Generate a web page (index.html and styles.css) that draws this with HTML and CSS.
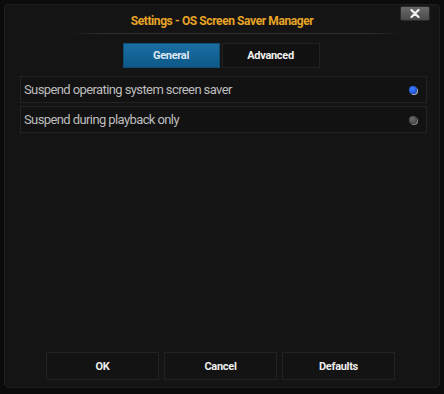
FILE: index.html
```html
<!DOCTYPE html>
<html lang="en">

<head>
  <meta charset="UTF-8">
  <meta name="viewport" content="width=device-width, initial-scale=1.0">
  <title>Settings</title>
  <link rel="stylesheet" href="styles.css">
</head>

<body>
  <div class="dialog">
    <div class="dialog-head">
      <h1 class="dialog-title">Settings - OS Screen Saver Manager</h1>
      <button class="close-btn">
        <svg width="10" height="9" viewBox="0 0 10 9">
          <path d="M1.5 1 L8.5 8 M8.5 1 L1.5 8" stroke="#f2f2f2" stroke-width="2.2" stroke-linecap="round" />
        </svg>
      </button>
    </div>
    <div class="title-rule"></div>

    <div class="tabs">
      <button class="tab tab-active">General</button>
      <button class="tab">Advanced</button>
    </div>

    <div class="settings">
      <div class="setting-row">
        <span>Suspend operating system screen saver</span>
        <span class="radio radio-on"></span>
      </div>
      <div class="setting-row">
        <span>Suspend during playback only</span>
        <span class="radio"></span>
      </div>
    </div>

    <div class="dialog-foot">
      <button class="foot-btn">OK</button>
      <button class="foot-btn">Cancel</button>
      <button class="foot-btn">Defaults</button>
    </div>
  </div>
</body>

</html>
```

FILE: styles.css
```css
body {
  margin: 0;
  background-color: #0b0b0b;
  font-family: 'Roboto', 'Liberation Sans', sans-serif;
}

.dialog {
  box-sizing: border-box;
  display: flex;
  flex-direction: column;
  width: 436px;
  height: 384px;
  margin: 4px 0 0 4px;
  background-color: #141414;
  border: 1px solid #1e1e1e;
  border-radius: 4px;
  box-shadow: 0 2px 0 #050505;
}

.dialog-head {
  position: relative;
  display: flex;
  justify-content: center;
  padding-top: 9px;
  height: 19px;
}

.dialog-title {
  margin: 0;
  font-size: 12px;
  line-height: 14px;
  font-weight: 700;
  letter-spacing: -0.4px;
  color: #e8a426;
}

.close-btn {
  position: absolute;
  top: 1px;
  right: 9px;
  display: flex;
  align-items: center;
  justify-content: center;
  width: 30px;
  height: 15px;
  padding: 0;
  border: 1px solid #2a2a2a;
  border-radius: 2px;
  background: linear-gradient(#6a6a6a, #4a4a4a);
}

.title-rule {
  height: 1px;
  margin: 0 36px 0 64px;
  background: linear-gradient(90deg, transparent, #2e2e2e 10%, #2e2e2e 90%, transparent);
}

.tabs {
  display: flex;
  justify-content: center;
  gap: 2px;
  margin-top: 9px;
  padding-right: 2px;
}

.tab {
  width: 98px;
  height: 25px;
  padding: 0;
  border: 1px solid #222;
  background-color: #111;
  color: #f0f0f0;
  font-family: inherit;
  font-size: 11px;
  font-weight: 700;
  letter-spacing: -0.3px;
}

.tab-active {
  width: 97px;
  border-color: #0f4d75;
  background: linear-gradient(#1a6ea3, #0d5888);
  color: #dde9f2;
}

.settings {
  display: flex;
  flex-direction: column;
  gap: 3px;
  margin: 8px 12px 0 15px;
}

.setting-row {
  display: flex;
  align-items: center;
  justify-content: space-between;
  height: 25px;
  padding: 0 9px 0 3px;
  border: 1px solid #232323;
  background-color: #121212;
  color: #bdbdbd;
  font-size: 13px;
  letter-spacing: -0.6px;
}

.radio {
  width: 8px;
  height: 8px;
  border-radius: 50%;
  background: radial-gradient(circle at 40% 35%, #6a6a6a, #3a3a3a);
  box-shadow: 1px 1px 0 #8a8a8a;
}

.radio-on {
  background: radial-gradient(circle at 40% 35%, #3c7cff, #1446c8);
  box-shadow: 1px 1px 0 #b0b0b0;
}

.dialog-foot {
  display: flex;
  gap: 5px;
  margin-top: auto;
  margin-bottom: 7px;
  padding-left: 41px;
}

.foot-btn {
  width: 113px;
  height: 28px;
  padding: 0;
  border: 1px solid #222;
  background-color: #131313;
  color: #eeeeee;
  font-family: inherit;
  font-size: 11px;
  font-weight: 700;
  letter-spacing: -0.3px;
}
```
